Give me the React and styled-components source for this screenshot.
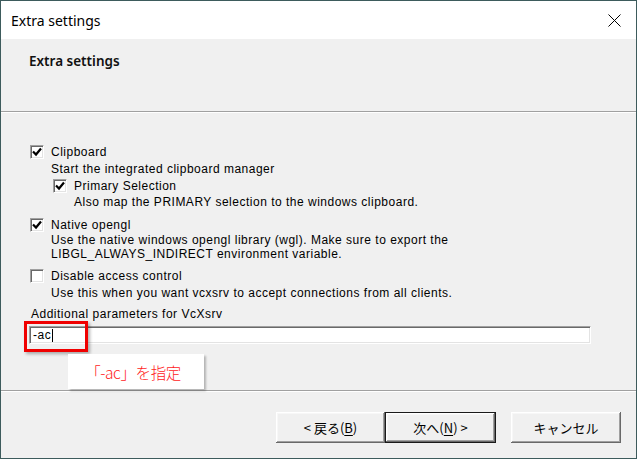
import React from "react";
import styled, { createGlobalStyle } from "styled-components";

const Global = createGlobalStyle`
  html, body { margin: 0; padding: 0; background: #fff; }
  #root { width: 637px; height: 459px; }
`;

const Window = styled.div`
  box-sizing: border-box;
  width: 637px;
  height: 459px;
  border: 1px solid #3d5b5c;
  display: flex;
  flex-direction: column;
  background: #f0f0f0;
  overflow: hidden;
`;

const TitleBar = styled.div`
  height: 38px;
  flex: none;
  background: #fff;
  display: flex;
  align-items: center;
  justify-content: space-between;
  padding: 0 15px 0 10px;
  font-family: "Noto Sans", sans-serif;
  font-size: 14px;
  color: #000;
`;

const Header = styled.div`
  height: 72px;
  flex: none;
  box-sizing: border-box;
  padding: 13px 28px;
  font-family: "Noto Sans", sans-serif;
  font-size: 13.5px;
  font-weight: 600;
  color: #111;
`;

const Separator = styled.div`
  height: 1px;
  flex: none;
  background: #a0a0a0;
  border-bottom: 1px solid #fff;
`;

const Body = styled.div`
  position: relative;
  height: 277px;
  flex: none;
  box-sizing: border-box;
  padding: 31px 29px 0 29px;
  display: flex;
  flex-direction: column;
  font-family: "Liberation Sans", Arial, sans-serif;
  font-size: 12px;
  letter-spacing: 0.5px;
  color: #000;
`;

const CheckRow = styled.div`
  height: 16px;
  display: flex;
  align-items: center;
  gap: 7px;
  margin-top: ${(p) => p.$mt || 0}px;
  margin-left: ${(p) => p.$indent || 0}px;
`;

const Box = styled.span`
  box-sizing: border-box;
  width: 14px;
  height: 14px;
  flex: none;
  background: #fff;
  border-top: 1px solid #a0a0a0;
  border-left: 1px solid #a0a0a0;
  border-bottom: 1px solid #fff;
  border-right: 1px solid #fff;
  box-shadow: inset 1px 1px 0 #696969, inset -1px -1px 0 #e3e3e3;
  display: flex;
  align-items: center;
  justify-content: center;
`;

const Desc = styled.div`
  line-height: 14px;
  padding-left: ${(p) => 21 + (p.$indent || 0)}px;
  margin-top: ${(p) => p.$mt || 0}px;
  white-space: nowrap;
`;

const Label = styled.div`
  line-height: 14px;
  margin-top: ${(p) => p.$mt || 0}px;
  padding-left: 1px;
`;

const Input = styled.div`
  box-sizing: border-box;
  margin-top: 5px;
  margin-left: -1px;
  width: 562px;
  height: 18px;
  background: #fff;
  border-top: 1px solid #a0a0a0;
  border-left: 1px solid #a0a0a0;
  border-bottom: 1px solid #fff;
  border-right: 1px solid #fff;
  box-shadow: inset 1px 1px 0 #696969, inset -1px -1px 0 #e3e3e3;
  display: flex;
  align-items: center;
  padding-left: 3px;
  line-height: 14px;
`;

const Caret = styled.span`
  display: inline-block;
  width: 1px;
  height: 13px;
  background: #000;
  margin-left: 1px;
`;

const Highlight = styled.div`
  position: absolute;
  left: 23px;
  top: 208px;
  width: 64px;
  height: 31px;
  box-sizing: border-box;
  border: 3px solid #f00000;
  box-shadow: 2px 2px 3px rgba(0, 0, 0, 0.3);
`;

const Callout = styled.div`
  position: absolute;
  left: 67px;
  top: 241px;
  width: 136px;
  height: 35px;
  background: #fff;
  box-shadow: 2px 2px 2px rgba(0, 0, 0, 0.25);
  display: flex;
  align-items: center;
  justify-content: center;
  font-family: "Noto Sans CJK JP", sans-serif;
  font-size: 15.5px;
  font-weight: 300;
  letter-spacing: -0.4px;
  color: #ff1a1a;
  padding-right: 6px;
  box-sizing: border-box;
`;

const Footer = styled.div`
  flex: 1;
  display: flex;
  justify-content: flex-end;
  align-items: flex-start;
  padding: 20px 15px 0 0;
`;

const ButtonGroup = styled.div`
  display: flex;
  margin-right: 15px;
`;

const Button = styled.button`
  box-sizing: border-box;
  width: ${(p) => p.$w || 109}px;
  height: 31px;
  padding: 0;
  background: #f0f0f0;
  border: ${(p) => (p.$default ? "1px solid #1a1a1a" : "none")};
  box-shadow: inset -1px -1px 0 #696969, inset 1px 1px 0 #fff,
    inset -2px -2px 0 #a0a0a0, inset 2px 2px 0 #f7f7f7;
  font-family: "Noto Sans CJK JP", sans-serif;
  font-size: 13px;
  color: #000;
  display: flex;
  align-items: center;
  justify-content: center;
  u { text-decoration: underline; text-underline-offset: 2px; }
`;

const Check = () => (
  <svg width="10" height="10" viewBox="0 0 10 10">
    <path d="M1 4.5 L4 7.5 L9 1.5" fill="none" stroke="#000" strokeWidth="2.2" />
  </svg>
);

const CloseIcon = () => (
  <svg width="13" height="13" viewBox="0 0 13 13">
    <path d="M0.5 0.5 L12.5 12.5 M12.5 0.5 L0.5 12.5" stroke="#000" strokeWidth="1" />
  </svg>
);

const Option = ({ checked, label, mt, indent }) => (
  <CheckRow $mt={mt} $indent={indent}>
    <Box>{checked && <Check />}</Box>
    <span>{label}</span>
  </CheckRow>
);

export default function App() {
  return (
    <>
      <Global />
      <Window>
        <TitleBar>
          <span>Extra settings</span>
          <CloseIcon />
        </TitleBar>
        <Header>Extra settings</Header>
        <Separator />
        <Body>
          <Option checked label="Clipboard" />
          <Desc $mt={2}>Start the integrated clipboard manager</Desc>
          <Option checked label="Primary Selection" mt={2} indent={23} />
          <Desc $mt={1} $indent={23}>
            Also map the PRIMARY selection to the windows clipboard.
          </Desc>
          <Option checked label="Native opengl" mt={8} />
          <Desc>
            Use the native windows opengl library (wgl). Make sure to export the
            <br />
            LIBGL_ALWAYS_INDIRECT environment variable.
          </Desc>
          <Option label="Disable access control" mt={7} />
          <Desc $mt={2}>Use this when you want vcxsrv to accept connections from all clients.</Desc>
          <Label $mt={7}>Additional parameters for VcXsrv</Label>
          <Input>
            -ac<Caret />
          </Input>
          <Highlight />
          <Callout>「-ac」を指定</Callout>
        </Body>
        <Separator />
        <Footer>
          <ButtonGroup>
            <Button>
              &lt; 戻る(<u>B</u>)
            </Button>
            <Button $default $w={111}>
              次へ(<u>N</u>) &gt;
            </Button>
          </ButtonGroup>
          <Button $w={110}>キャンセル</Button>
        </Footer>
      </Window>
    </>
  );
}
